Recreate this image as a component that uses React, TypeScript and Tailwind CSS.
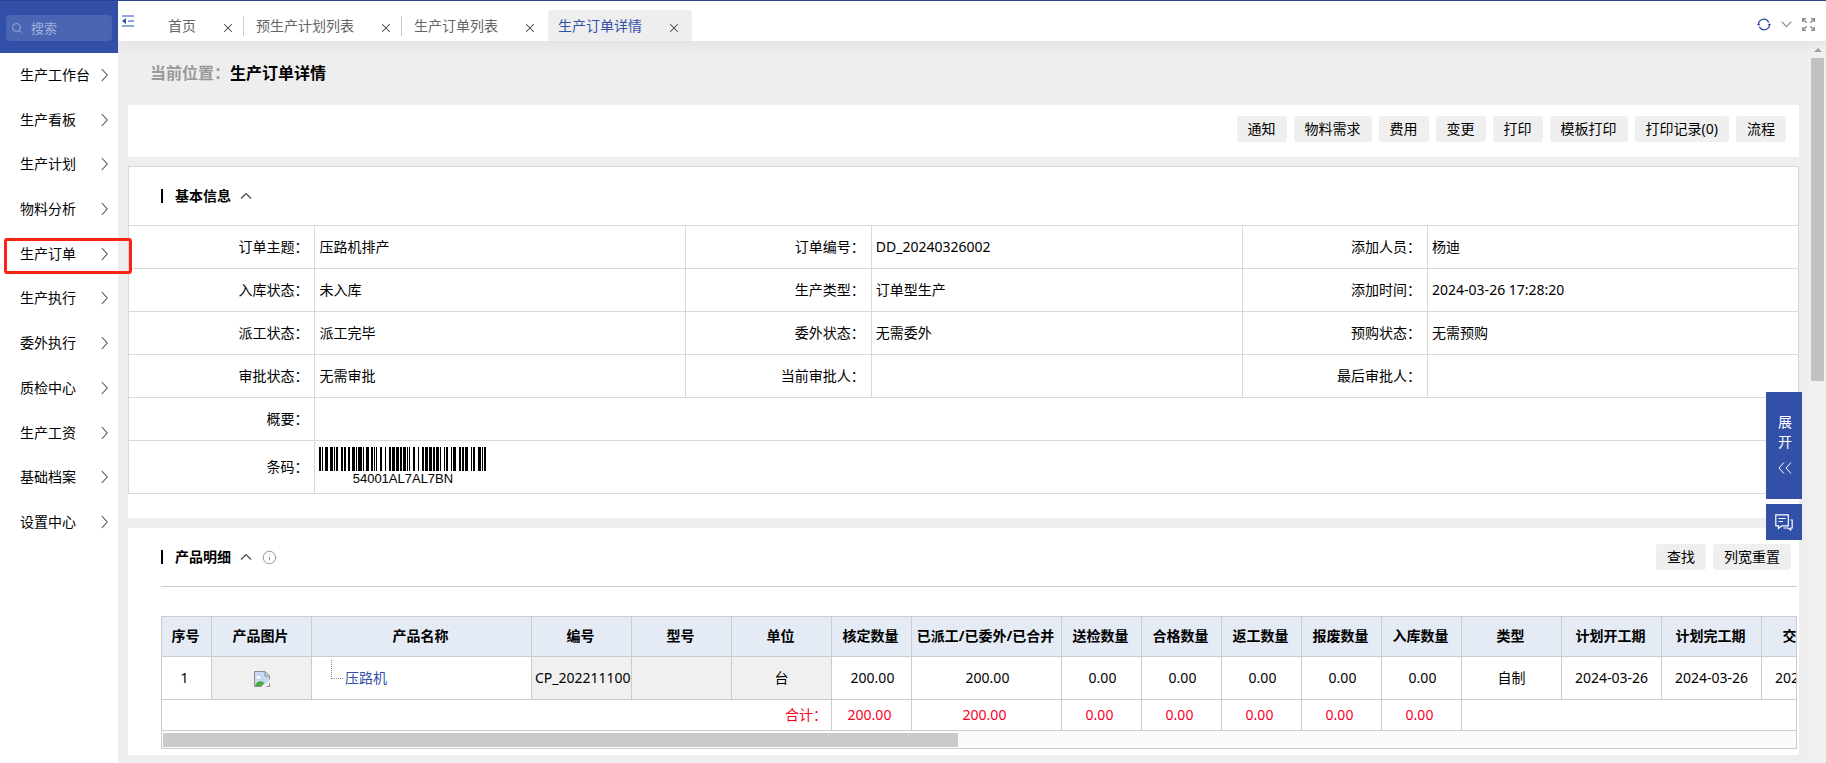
import React from 'react';
import clsx from 'clsx';
import { Search, X, Info } from 'lucide-react';

const menuItems = [
  '生产工作台',
  '生产看板',
  '生产计划',
  '物料分析',
  '生产订单',
  '生产执行',
  '委外执行',
  '质检中心',
  '生产工资',
  '基础档案',
  '设置中心',
];

const tabs = ['首页', '预生产计划列表', '生产订单列表', '生产订单详情'];

const actions = ['通知', '物料需求', '费用', '变更', '打印', '模板打印', '打印记录(0)', '流程'];

const infoRows = [
  [['订单主题', '压路机排产'], ['订单编号', 'DD_20240326002'], ['添加人员', '杨迪']],
  [['入库状态', '未入库'], ['生产类型', '订单型生产'], ['添加时间', '2024-03-26 17:28:20']],
  [['派工状态', '派工完毕'], ['委外状态', '无需委外'], ['预购状态', '无需预购']],
  [['审批状态', '无需审批'], ['当前审批人', ''], ['最后审批人', '']],
];

const columns = [
  { title: '序号', width: 50 },
  { title: '产品图片', width: 100 },
  { title: '产品名称', width: 220 },
  { title: '编号', width: 100 },
  { title: '型号', width: 100 },
  { title: '单位', width: 100 },
  { title: '核定数量', width: 80 },
  { title: '已派工/已委外/已合并', width: 150 },
  { title: '送检数量', width: 80 },
  { title: '合格数量', width: 80 },
  { title: '返工数量', width: 80 },
  { title: '报废数量', width: 80 },
  { title: '入库数量', width: 80 },
  { title: '类型', width: 100 },
  { title: '计划开工期', width: 100 },
  { title: '计划完工期', width: 100 },
  { title: '交货日期', width: 100 },
];

const quantities = ['200.00', '200.00', '0.00', '0.00', '0.00', '0.00', '0.00'];

/** Code 128 symbols, bar and space widths in turn */
const barcode = [
  '211232', '311123', '212222', '311141', '123221', '111323', '132131', '312131',
  '111323', '132131', '312131', '131123', '113321', '213311', '2331112',
].join('');

function Barcode({ value }: { value: string }) {
  const bars: { x: number; w: number }[] = [];
  let x = 0;
  barcode.split('').forEach((n, i) => {
    const w = parseInt(n);
    if (i % 2 === 0) bars.push({ x, w });
    x += w;
  });

  return (
    <div className="flex w-[167px] flex-col items-center">
      <svg width="167" height="24" viewBox="0 0 167 24" shapeRendering="crispEdges" aria-hidden="true">
        {bars.map(b => <rect key={b.x} x={b.x} y="0" width={b.w} height="24" />)}
      </svg>
      <span className="font-['Liberation_Sans',sans-serif] text-[13px] leading-4">{value}</span>
    </div>
  )
}

function ChevronUp() {
  return (
    <svg width="12" height="8" viewBox="0 0 12 8" fill="none" stroke="#444" strokeWidth="1.2" aria-hidden="true">
      <path d="M1 6.5 6 1.5l5 5" />
    </svg>
  )
}

function SectionTitle({ children }: { children: React.ReactNode }) {
  return (
    <h2 className="flex items-center font-bold">
      <span className="mr-3 h-3.5 w-0.5 bg-black"></span>
      {children}
      <button className="ml-[9px]" aria-label="收起"><ChevronUp /></button>
    </h2>
  )
}

function GrayButton({ children }: { children: React.ReactNode }) {
  return (
    <button className="h-[26px] whitespace-nowrap rounded-[3px] bg-[#efefef] px-[11px]">{children}</button>
  )
}

function Sidebar() {
  return (
    <aside className="w-[118px] shrink-0 bg-white">
      <div className="h-[52px] bg-[#3250a8] px-1.5 pt-3.5">
        <label className="flex h-[26px] items-center gap-2 rounded-[4px] bg-[#4a65b2] pl-[5px] text-[#9fb0dd]">
          <Search size={12} strokeWidth={1.8} className="shrink-0" />
          <input
            type="text"
            placeholder="搜索"
            aria-label="搜索"
            className="w-full min-w-0 bg-transparent text-[13px] outline-none placeholder:text-[#9fb0dd]"
          />
        </label>
      </div>

      <nav className="grid h-[492px] auto-rows-fr">
        {menuItems.map(item => (
          <a key={item} href="#" className="relative flex items-center justify-between pb-px pl-5 pr-2.5">
            {item}
            <svg width="7" height="14" viewBox="0 0 7 14" fill="none" stroke="#555" strokeWidth="1.1" aria-hidden="true">
              <path d="m.8 1 5.400 6-5.400 6" />
            </svg>
            {item === '生产订单' &&
              <span className="absolute left-1 top-1.5 z-20 h-9 w-32 rounded-[3px] border-[3px] border-[#fb2216]"></span>
            }
          </a>
        ))}
      </nav>
    </aside>
  )
}

function TabBar() {
  return (
    <header className="relative z-10 flex h-10 items-end bg-white shadow-[0_4px_12px_rgba(0,0,0,0.06)]">
      <button className="mb-3.5 ml-1 w-[34px]" aria-label="收起菜单">
        <svg width="12" height="12" viewBox="0 0 12 12" aria-hidden="true">
          <path d="M0 0h12v2H0zM6 5h6v2H6zM0 10h12v2H0z" fill="#93a6d8" />
          <path d="M0 6l4-3v6z" fill="#3250a8" />
        </svg>
      </button>

      <div className="flex">
        {tabs.map((tab, i) => {
          const active = i === tabs.length - 1;
          return (
            <div
              key={tab}
              className={clsx(
                'flex h-[31px] items-center',
                active ? 'ml-0.5 rounded-t-[4px] bg-[#eee] pl-2.5 pr-0.5 text-[#3250a8]' : 'pl-3 text-[#666]'
              )}
            >
              <a href="#">{tab}</a>
              <button className="ml-[25px] mr-2 mt-1 text-[#444]" aria-label={'关闭' + tab}>
                <X size={14} strokeWidth={1.8} />
              </button>
              <span className={clsx('h-5 w-px', i < tabs.length - 2 && 'bg-[#ccc]')}></span>
            </div>
          )
        })}
      </div>

      <div className="mb-2.5 ml-auto mr-[11px] flex items-center gap-2.5">
        <button aria-label="刷新">
          <svg width="14" height="13" viewBox="0 0 14 13" fill="none" stroke="#3250a8" strokeWidth="1.200" aria-hidden="true">
            <path d="M1.500 7.500v-1a5.300 5.300 0 0 1 10.200-2M12.500 5.500v1a5.300 5.300 0 0 1-10.200 2" />
            <path d="M0 7h3.200L1.600 4.600zM14 6h-3.200l1.600 2.400z" fill="#3250a8" stroke="none" />
          </svg>
        </button>
        <button aria-label="更多">
          <svg width="11" height="7" viewBox="0 0 11 7" fill="none" stroke="#8a8a8a" strokeWidth="1.200" aria-hidden="true">
            <path d="m.7.7 4.800 5 4.800-5" />
          </svg>
        </button>
        <button aria-label="全屏">
          <svg width="13" height="13" viewBox="0 0 13 13" fill="none" stroke="#8a8a8a" strokeWidth="1.300" aria-hidden="true">
            <path d="M.7 4V.7H4M.7.7l4 4M9 .7h3.300V4M12.300.7l-4 4M.7 9v3.300H4M.7 12.300l4-4M9 12.300h3.300V9M12.300 12.300l-4-4" />
          </svg>
        </button>
      </div>
    </header>
  )
}

function InfoTable() {
  const label = 'h-[43px] border-t border-[#d9d9d9] pb-px pr-1.5 text-right font-normal';
  const cell = 'border-l border-t border-[#d9d9d9] px-1 pb-px';

  return (
    <table className="w-full table-fixed border-separate border-spacing-0">
      <colgroup>
        {[0, 1, 2].map(i => (
          <React.Fragment key={i}>
            <col className="w-1/9" />
            <col className="w-2/9" />
          </React.Fragment>
        ))}
      </colgroup>
      <tbody>
        {infoRows.map((row, i) => (
          <tr key={i}>
            {row.map(([name, value], j) => (
              <React.Fragment key={name}>
                <th scope="row" className={clsx(label, j > 0 && 'border-l')}>{name}：</th>
                <td className={cell}>{value}</td>
              </React.Fragment>
            ))}
          </tr>
        ))}
        <tr>
          <th scope="row" className={label}>概要：</th>
          <td colSpan={5} className={cell}></td>
        </tr>
        <tr>
          <th scope="row" className={label}>条码：</th>
          <td colSpan={5} className={clsx(cell, 'h-[53px]')}>
            <Barcode value="54001AL7AL7BN" />
          </td>
        </tr>
      </tbody>
    </table>
  )
}

function BrokenImage() {
  return (
    <svg width="16" height="16" viewBox="0 0 16 16" className="inline-block" role="img" aria-label="产品图片">
      <path d="M.5.5h10.500l4.500 4.500v5l-5 5.500H.5z" fill="#c6d8f3" />
      <path d="M2.500 6.500c0-2 2.500-2.500 3-1 1.500 0 1.500 2 0 2H3c-.5 0-.7-.5-.5-1z" fill="#fff" />
      <path d="M1 15c1-3.500 4-5.500 7-4.500l2.500 1.500-3 3z" fill="#44ab3f" />
      <path d="M.5 15.500V.5h10.500l4.500 4.500v3.500M11 .5V5h4.500" fill="none" stroke="#8f8f8f" />
      <path d="M7.500 16 16 8.500v3L11.500 16z" fill="#f0f0f0" />
      <path d="M.5 15.500h7M12.500 15.500h3v-3" fill="none" stroke="#8f8f8f" />
    </svg>
  )
}

function ProductTable() {
  const cell = 'h-[43px] overflow-hidden border-b border-r border-[#ccc] pb-px text-center';
  const sum = 'h-[31px] border-b border-r border-[#ccc] pb-px pr-1';

  return (
    <div className="overflow-hidden border border-[#ccc]">
      <table className="w-[1700px] table-fixed border-separate border-spacing-0 whitespace-nowrap">
        <colgroup>
          {columns.map(c => <col key={c.title} style={{ width: c.width }} />)}
        </colgroup>
        <thead>
          <tr>
            {columns.map(c => (
              <th key={c.title} scope="col" className="h-10 border-b border-r border-[#ccc] bg-[#e4ebf5] pb-0.5 pr-0.5 font-bold">
                {c.title}
              </th>
            ))}
          </tr>
        </thead>
        <tbody>
          <tr>
            <td className={clsx(cell, 'pr-1')}>1</td>
            <td className={clsx(cell, 'bg-[#f0f0f0]')}><BrokenImage /></td>
            <td className={cell}>
              <div className="flex items-center pl-[19px]">
                <span className="mb-4 mr-0.5 h-[19px] w-3 border-b border-l border-dotted border-[#888]"></span>
                <a href="#" className="text-[#3250a8]">压路机</a>
              </div>
            </td>
            <td className={clsx(cell, 'bg-[#f0f0f0]')}>
              <div className="overflow-hidden pl-[3px] text-left">CP_20221110001</div>
            </td>
            <td className={clsx(cell, 'bg-[#f0f0f0]')}></td>
            <td className={clsx(cell, 'bg-[#f0f0f0]')}>台</td>
            {quantities.map((q, i) => <td key={i} className={clsx(cell, 'pl-0.5')}>{q}</td>)}
            <td className={cell}>自制</td>
            <td className={cell}>2024-03-26</td>
            <td className={cell}>2024-03-26</td>
            <td className={cell}>2024-03-26</td>
          </tr>
          <tr className="text-center text-[#f8001f]">
            <td colSpan={6} className={clsx(sum, 'text-right')}>合计：</td>
            {quantities.map((q, i) => <td key={i} className={sum}>{q}</td>)}
            <td colSpan={4} className={sum}></td>
          </tr>
        </tbody>
      </table>

      <div className="h-[17px] bg-[#fafafa] px-px py-0.5">
        <div className="h-3.5 w-[48.7%] bg-[#cacacc]"></div>
      </div>
    </div>
  )
}

export default function App() {
  return (
    <div className="flex min-h-screen border-t border-[#2b4690] bg-[#eee] font-['Noto_Sans','Noto_Sans_CJK_SC',sans-serif] text-sm text-black">
      <Sidebar />

      <div className="flex min-w-0 flex-1 flex-col">
        <TabBar />

        <div className="flex flex-1">
          <main className="min-w-0 flex-1 pl-2.5 pr-2.5">
            <div className="flex h-16 items-center pb-px pl-[22px] text-base font-bold">
              <span className="text-[#999]">当前位置：</span>
              <h1>生产订单详情</h1>
            </div>

            <div className="flex justify-end gap-[7px] bg-white pb-[15px] pr-[13px] pt-[11px]">
              {actions.map(a => <GrayButton key={a}>{a}</GrayButton>)}
            </div>

            <section className="mt-[9px] bg-white pb-6">
              <div className="border border-[#d9d9d9]">
                <div className="flex h-[58px] items-center pl-8">
                  <SectionTitle>基本信息</SectionTitle>
                </div>
                <InfoTable />
              </div>
            </section>

            <section className="mb-2 mt-2.5 bg-white pb-1.5 pl-[33px] pr-0.5">
              <div className="flex h-[59px] items-center border-b border-[#ccc]">
                <SectionTitle>产品明细</SectionTitle>
                <Info size={15} strokeWidth={1.6} className="ml-2.5 text-[#999]" />
                <div className="ml-auto flex gap-[7px] pr-1.5">
                  <GrayButton>查找</GrayButton>
                  <GrayButton>列宽重置</GrayButton>
                </div>
              </div>
              <div className="mt-[29px]">
                <ProductTable />
              </div>
            </section>
          </main>

          {/* page scrollbar */}
          <div className="flex w-[17px] shrink-0 flex-col items-center bg-[#f0f0f0]">
            <svg width="8" height="17" viewBox="0 0 8 17" aria-hidden="true">
              <path d="M0 11 4 7l4 4z" fill="#a0a0a0" />
            </svg>
            <div className="h-[323px] w-[13px] bg-[#c1c1c1]"></div>
          </div>
        </div>
      </div>

      <div className="fixed right-6 top-[392px] z-20 flex w-9 flex-col gap-[5px] text-white">
        <button className="flex h-[107px] flex-col items-center bg-[#3250a8] pl-0.5 pt-5 leading-5">
          <span>展</span>
          <span>开</span>
          <svg width="14" height="12" viewBox="0 0 14 12" fill="none" stroke="#fff" className="mt-2.5" aria-hidden="true">
            <path d="M6 .5 1 6l5 5.500M13 .5 8 6l5 5.500" />
          </svg>
        </button>
        <button className="flex h-9 items-center justify-center bg-[#3250a8]" aria-label="消息">
          <svg width="18" height="17" viewBox="0 0 18 17" fill="none" stroke="#fff" strokeWidth="1.200" aria-hidden="true">
            <path d="M.8.8h12.500v11H6.500L3.500 14.500v-2.700H.8z" />
            <path d="M3.500 4.500h7M3.500 7.500h4.500M15.500 6h1.700v8h-1.500v2l-2.700-2H8.500" />
          </svg>
        </button>
      </div>
    </div>
  )
}
